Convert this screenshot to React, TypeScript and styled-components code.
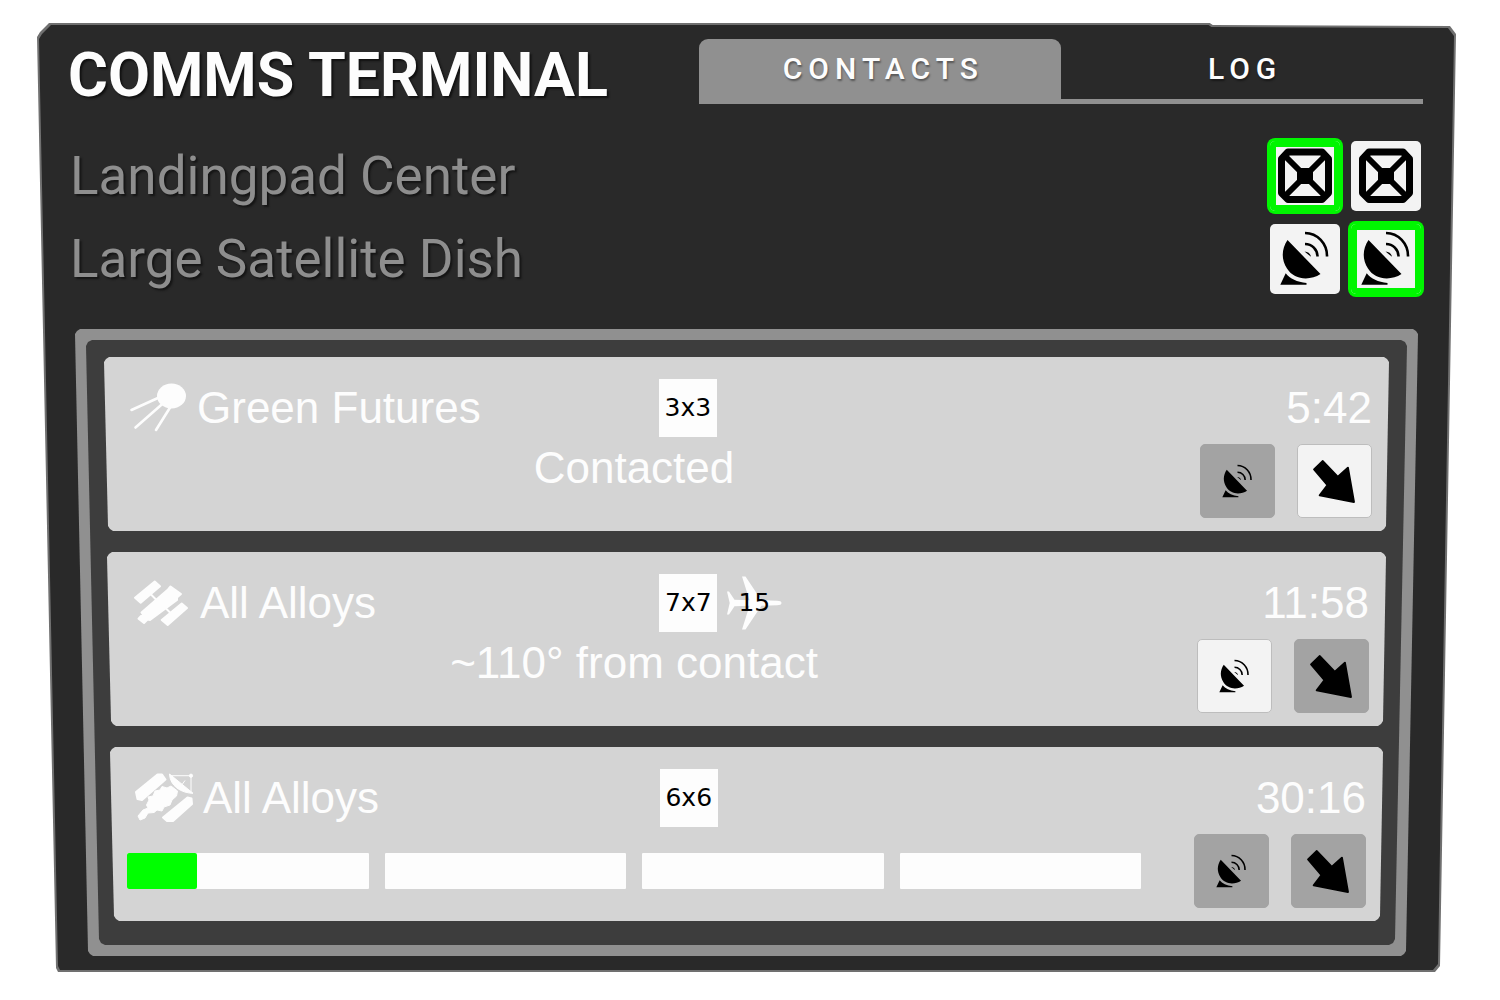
import React, { useState } from "react";
import styled, { createGlobalStyle, css } from "styled-components";

/* A slab that narrows towards its foot, with softened corners. */
const taper = (left: number, right: number, r: number) => {
  const s = Math.max(1, Math.round(r / 3));
  return css`
    clip-path: polygon(
      0 ${r}px,
      ${s}px ${s}px,
      ${r}px 0,
      calc(100% - ${r}px) 0,
      calc(100% - ${s}px) ${s}px,
      100% ${r}px,
      calc(100% - ${right}px) calc(100% - ${r}px),
      calc(100% - ${right + s}px) calc(100% - ${s}px),
      calc(100% - ${right + r}px) 100%,
      ${left + r}px 100%,
      ${left + s}px calc(100% - ${s}px),
      ${left}px calc(100% - ${r}px)
    );
  `;
};

const hull = css`
  clip-path: polygon(
    0 14px,
    3px 9px,
    12px 0,
    calc(83% - 5px) 0,
    calc(83% - 2px) 2px,
    calc(100% - 6px) 3px,
    100% 11px,
    calc(100% - 16px) calc(100% - 6px),
    calc(100% - 21px) 100%,
    21px 100%,
    19px calc(100% - 4px)
  );
`;

const GlobalStyle = createGlobalStyle`
  * { box-sizing: border-box; }
  body { margin: 0; background: #ffffff; }
  button { font: inherit; cursor: pointer; }
`;

const Page = styled.main`
  padding: 23px 44px 27px 37px;
`;

const Edge = styled.div`
  padding: 2px;
  background: #707070;
  ${hull}
`;

const Panel = styled.div`
  padding: 14px 31px 14px 29px;
  background: #292929;
  color: #fdfdfd;
  font-family: Roboto, "Liberation Sans", sans-serif;
  ${hull}
`;

const Header = styled.header`
  display: flex;
  justify-content: space-between;
  align-items: flex-start;
`;

const Title = styled.h1`
  margin: 0;
  font-size: 61px;
  line-height: 72px;
  font-weight: 700;
  white-space: nowrap;
  text-shadow: 2px 2px 2px #111111;
`;

const Tabs = styled.div`
  display: flex;
  width: 53.4%;
  border-bottom: 5px solid #909090;
`;

const Tab = styled.button<{ $active: boolean }>`
  flex: 1;
  height: 60px;
  padding: 0;
  border: 0;
  border-radius: 9px 9px 0 0;
  background: ${(p) => (p.$active ? "#909090" : "transparent")};
  color: #fdfdfd;
  font-size: 30px;
  line-height: 60px;
  font-weight: 500;
  letter-spacing: 6px;
  text-indent: 6px;
  text-shadow: 1px 2px 2px rgba(0, 0, 0, 0.4);
`;

const Buildings = styled.div`
  display: flex;
  flex-direction: column;
  gap: 13px;
  padding: 30px 2px 0;
`;

const Building = styled.div`
  display: flex;
  align-items: center;
  gap: 11px;
`;

const BuildingName = styled.span`
  flex: 1;
  color: #8e8e8e;
  font-size: 53px;
  line-height: 70px;
  text-shadow: 2px 2px 2px #151515;
`;

const SlotButton = styled.button<{ $selected: boolean }>`
  display: grid;
  place-items: center;
  width: 70px;
  height: 70px;
  padding: 0;
  border: 0;
  border-radius: 5px;
  background: #f3f3f3;
  box-shadow: ${(p) =>
    p.$selected ? "0 0 0 3px #00f500, inset 0 0 0 6px #00f500" : "none"};
`;

const Frame = styled.section`
  margin: 35px 5px 0 7px;
  padding: 11px;
  background: #909090;
  ${taper(13, 12, 5)}
`;

const List = styled.ul`
  display: flex;
  flex-direction: column;
  gap: 21px;
  margin: 0;
  padding: 17px 18px 24px;
  list-style: none;
  background: #3d3d3d;
  ${taper(13, 12, 6)}
`;

const Card = styled.li<{ $depth: number }>`
  margin: 0 ${(p) => p.$depth * 3}px;
  padding: 22px 17px 13px;
  background: #d4d4d4;
  font-family: "Liberation Sans", Arial, sans-serif;
  font-size: 44px;
  line-height: 48px;
  ${taper(4, 3, 5)}
`;

const CardHead = styled.div`
  display: flex;
  align-items: center;
  height: 58px;
`;

const Contact = styled.h2`
  display: flex;
  align-items: center;
  flex: 0 0 43%;
  gap: 10px;
  margin: 0;
  padding-left: 8px;
  font-size: inherit;
  font-weight: 400;
`;

const Badges = styled.div`
  display: flex;
  gap: 8px;
  color: #000000;
  font-family: "DejaVu Sans", sans-serif;
  font-size: 25px;
`;

const PadBadge = styled.span`
  width: 58px;
  height: 58px;
  background: #fdfdfd;
  line-height: 58px;
  text-align: center;
`;

const PlaneBadge = styled.span`
  display: grid;
  place-items: center;
  width: 58px;
  height: 58px;

  > * {
    grid-area: 1 / 1;
  }
`;

const Time = styled.time`
  margin-left: auto;
`;

const CardBody = styled.div`
  display: flex;
  align-items: flex-start;
  gap: 22px;
  padding-top: 7px;
`;

const Status = styled.p`
  flex: 1;
  margin: 0 31px 0 0;
  text-align: center;
`;

const Progress = styled.div`
  display: flex;
  align-self: center;
  flex: 1;
  gap: 16px;
  margin-right: 31px;
`;

const Segment = styled.div`
  flex: 1;
  height: 36px;
  border-radius: 1px;
  background: #fdfdfd;
`;

const Fill = styled.div`
  height: 100%;
  border-radius: 2px;
  background: #00ff00;
`;

const ActionButton = styled.button`
  display: grid;
  place-items: center;
  width: 75px;
  height: 74px;
  padding: 0;
  border: 1px solid #bdbdbd;
  border-radius: 5px;
  background: #f3f3f3;

  &:disabled {
    border-color: #a3a3a3;
    background: #a3a3a3;
    cursor: default;
  }
`;

const Glyph = styled.svg`
  display: block;
  flex: none;
`;

const DishIcon = ({ size }: { size: number }) => (
  <Glyph width={size} height={size} viewBox="0 0 70 70" aria-hidden="true">
    <path d="M17.5 16 50.5 50C40 57 24 56 17 44.500C11 35 11.500 25 17.500 16Z" />
    <path d="M15.700 49.300C20 55 27 58 36.500 59V60.700H10.300Z" />
    <path
      d="M35 9A22 23 0 0 1 57 32.500M35 20A12.500 12.500 0 0 1 47.500 32.500"
      fill="none"
      stroke="#000"
      strokeWidth="2.6"
    />
    <path d="M34.500 27.500Q40 28 41 32.800Z" />
  </Glyph>
);

const PadIcon = () => (
  <Glyph width={70} height={70} viewBox="0 0 70 70" aria-hidden="true">
    <path
      d="M18 11H52L58.500 18V52L52 58.500H18L11.500 52V18Z"
      fill="none"
      stroke="#000"
      strokeWidth="7"
      strokeLinejoin="round"
    />
    <path d="M14 14 56 56M56 14 14 56" stroke="#000" strokeWidth="6" />
    <rect x="27" y="27" width="16" height="16" rx="1" />
  </Glyph>
);

const ArrowIcon = () => (
  <Glyph width={73} height={73} viewBox="0 0 75 75" aria-hidden="true">
    <path
      d="M25.500 16.500 41 32.700 51.300 23.300 57.500 58.500 22.300 51.800 30.300 41.300 16.500 25Z"
      stroke="#000"
      strokeWidth="2"
      strokeLinejoin="round"
    />
  </Glyph>
);

const SputnikIcon = () => (
  <Glyph width={58} height={58} viewBox="0 0 58 58" aria-hidden="true">
    <ellipse cx="42.500" cy="17" rx="14.500" ry="12.500" fill="#fdfdfd" />
    <path
      d="M2.500 31 30 18.500M6.500 48.500 35 23.500M27 51 42 27"
      stroke="#fdfdfd"
      strokeWidth="2.600"
      strokeLinecap="round"
    />
  </Glyph>
);

const StationIcon = () => (
  <Glyph width={58} height={58} viewBox="0 0 58 58" aria-hidden="true">
    <g fill="#fdfdfd" stroke="#fdfdfd" strokeLinejoin="round" strokeWidth="2">
      <path d="M22.700 7.500 28 12.300 8.700 28.700 3 23.700Z" />
      <path d="M49.700 29.500 55 34 35.700 51 29.700 46Z" />
      <path d="M38.500 12.500 49 20 45 23.500V26L18 46 16 45 14 47 12 49 6.500 44.700 9 42 12 42 9.500 38.500 36 15.500Z" />
      <path d="M18 19.500 24 25.500M34 34.500 40 40.500" />
    </g>
  </Glyph>
);

const ProbeIcon = () => (
  <Glyph width={58} height={58} viewBox="0 0 58 58" overflow="visible" aria-hidden="true">
    <g fill="#fdfdfd" stroke="#fdfdfd" strokeLinejoin="round">
      <path d="M22.500 5.500 27 5.500 30.500 10.500 7 31 2.500 30 1 23Z" strokeWidth="2" />
      <path d="M52.500 28.500 56.500 29.500 57 35 38 52 32 52 28 48.500Z" strokeWidth="2" />
      <path d="M27 17.500 32 19 36 17 42.500 22 41.500 27 37 31 35 36 29 38 27 42 22 41 19 43.500 13 44 10 49 5 51 3 47 8 41 13 39 11.500 36 14 31 13 28 18 27 20 22 25 21Z" />
      <path d="M34.500 5 58 24.300C46 24 35 17 34.500 5Z" />
      <path d="M36 6.700H56V23M46 17 50 11.500" fill="none" />
      <circle cx="56" cy="6.700" r="1.600" />
    </g>
  </Glyph>
);

const PlaneIcon = () => (
  <Glyph width={58} height={58} viewBox="0 0 58 58" aria-hidden="true">
    <path
      d="M56.500 29C56.500 30.500 55 31.200 52 31.200L36.500 31.700 32.500 37.500 20.500 55.500H17L24.500 31.700 9.500 32.200 4 40.500H2L4.700 29 2 17.500H4L9.500 25.800 24.500 26.300 17 2.500H20.500L32.500 20.500 36.500 26.300 52 26.800C55 26.800 56.500 27.500 56.500 29Z"
      fill="#fdfdfd"
    />
  </Glyph>
);

type ContactData = {
  name: string;
  icon: React.ReactNode;
  pad: string;
  seats?: number;
  time: string;
  status?: string;
  segments?: number[];
  canAim: boolean;
  canLand: boolean;
};

const contacts: ContactData[] = [
  {
    name: "Green Futures",
    icon: <SputnikIcon />,
    pad: "3x3",
    time: "5:42",
    status: "Contacted",
    canAim: false,
    canLand: true,
  },
  {
    name: "All Alloys",
    icon: <StationIcon />,
    pad: "7x7",
    seats: 15,
    time: "11:58",
    status: "~110° from contact",
    canAim: true,
    canLand: false,
  },
  {
    name: "All Alloys",
    icon: <ProbeIcon />,
    pad: "6x6",
    time: "30:16",
    segments: [29, 0, 0, 0],
    canAim: false,
    canLand: false,
  },
];

const ContactCard = ({ data, depth }: { data: ContactData; depth: number }) => (
  <Card $depth={depth}>
    <CardHead>
      <Contact>
        {data.icon}
        <span>{data.name}</span>
      </Contact>
      <Badges>
        <PadBadge>{data.pad}</PadBadge>
        {data.seats !== undefined && (
          <PlaneBadge>
            <PlaneIcon />
            <span>{data.seats}</span>
          </PlaneBadge>
        )}
      </Badges>
      <Time>{data.time}</Time>
    </CardHead>
    <CardBody>
      {data.segments ? (
        <Progress role="group" aria-label="Decoding progress">
          {data.segments.map((value, i) => (
            <Segment key={i} role="progressbar" aria-valuenow={value} aria-label={`Stage ${i + 1}`}>
              {value > 0 && <Fill style={{ width: `${value}%` }} />}
            </Segment>
          ))}
        </Progress>
      ) : (
        <Status>{data.status}</Status>
      )}
      <ActionButton disabled={!data.canAim} aria-label="Aim dish">
        <DishIcon size={43} />
      </ActionButton>
      <ActionButton disabled={!data.canLand} aria-label="Call to land">
        <ArrowIcon />
      </ActionButton>
    </CardBody>
  </Card>
);

export default function App() {
  const [tab, setTab] = useState("CONTACTS");
  const [pad, setPad] = useState(0);
  const [dish, setDish] = useState(1);

  return (
    <Page>
      <GlobalStyle />
      <Edge>
        <Panel>
          <Header>
            <Title>COMMS TERMINAL</Title>
            <Tabs role="tablist">
              {["CONTACTS", "LOG"].map((name) => (
                <Tab
                  key={name}
                  role="tab"
                  aria-selected={tab === name}
                  $active={tab === name}
                  onClick={() => setTab(name)}
                >
                  {name}
                </Tab>
              ))}
            </Tabs>
          </Header>
          <Buildings>
            <Building>
              <BuildingName>Landingpad Center</BuildingName>
              {[0, 1].map((i) => (
                <SlotButton
                  key={i}
                  $selected={pad === i}
                  aria-pressed={pad === i}
                  aria-label={`Landing pad ${i + 1}`}
                  onClick={() => setPad(i)}
                >
                  <PadIcon />
                </SlotButton>
              ))}
            </Building>
            <Building>
              <BuildingName>Large Satellite Dish</BuildingName>
              {[0, 1].map((i) => (
                <SlotButton
                  key={i}
                  $selected={dish === i}
                  aria-pressed={dish === i}
                  aria-label={`Satellite dish ${i + 1}`}
                  onClick={() => setDish(i)}
                >
                  <DishIcon size={70} />
                </SlotButton>
              ))}
            </Building>
          </Buildings>
          <Frame aria-label="Contacts">
            <List>
              {contacts.map((c, i) => (
                <ContactCard key={i} data={c} depth={i} />
              ))}
            </List>
          </Frame>
        </Panel>
      </Edge>
    </Page>
  );
}
